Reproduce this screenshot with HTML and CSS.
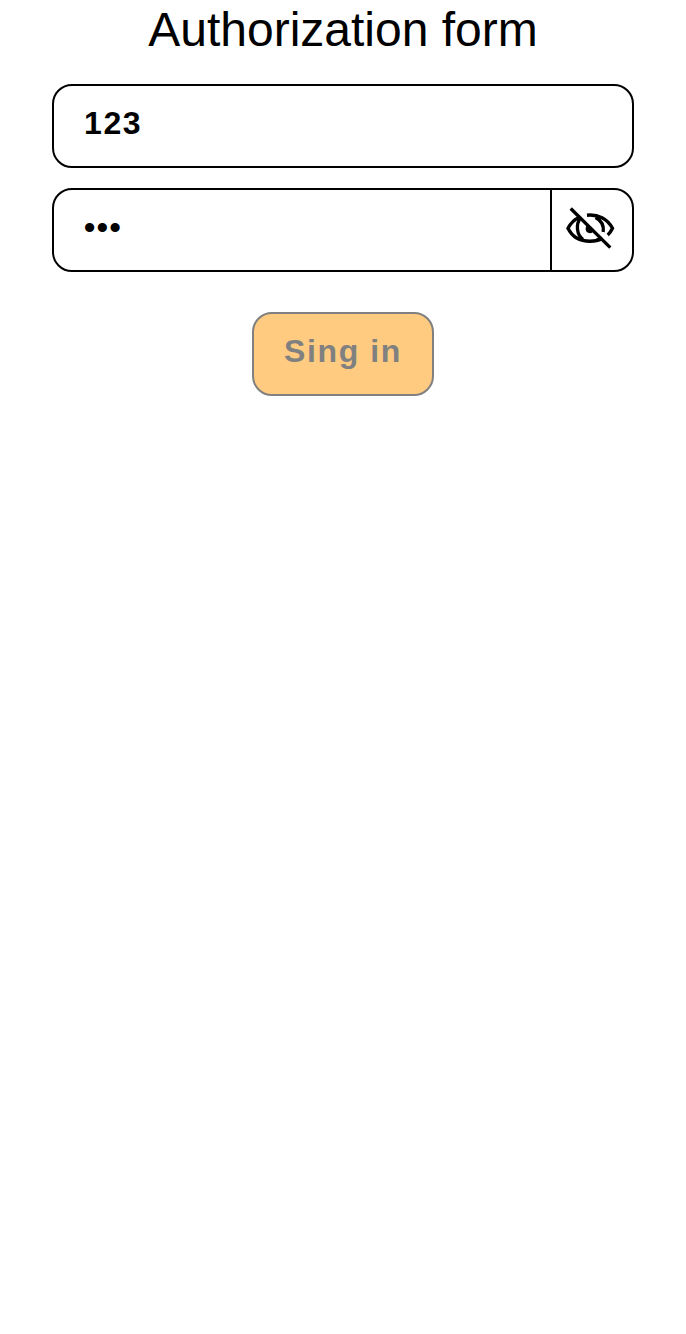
FILE: index.html
```html
<!DOCTYPE html>
<html lang="en">
<head>
<meta charset="utf-8">
<title>Authorization form</title>
<link rel="stylesheet" href="styles.css">
</head>
<body>
<form class="form">
  <h1 class="title">Authorization form</h1>
  <div class="field"><input class="value" type="text" value="123" aria-label="Login"></div>
  <div class="field">
    <input class="value" type="password" value="123" aria-label="Password">
    <button class="toggle" type="button" aria-label="Show password">
      <svg class="eye" viewBox="0 0 80 80" fill="none" stroke="#000" stroke-width="3.400">
        <path d="M28 27C22 29.500 18.500 33.500 16 38.300C20 46.500 28 51.300 38 51.300C43 51.300 47.500 50 50.500 48.300M35 25.200C46 24 55.500 29 60.500 38.300C59.200 41 57.500 43.500 55.700 45"/>
        <path d="M28.500 28C23.800 34 24.300 44.500 31 49.500M43.500 27.500C49.500 30.500 52 36 51.200 42M49 47.800C47.500 49 46 50 44 50.300" stroke-width="3.300"/>
        <path d="M35.500 34.800C33 36.500 33 41.500 36 42.700C38.500 43.800 41.500 42.800 42.300 40Z" fill="#000" stroke="none"/>
        <path d="M18.700 18.500L58.300 57.600" stroke-width="3.300"/>
      </svg>
    </button>
  </div>
  <button class="submit" type="button" disabled>Sing in</button>
</form>
</body>
</html>
```
FILE: styles.css
```css
* { box-sizing: border-box; }
body { margin: 0; background: #fff; color: #000; font-family: "Liberation Sans", Arial, sans-serif; }
.form { display: flex; flex-direction: column; align-items: center; padding: 2px 52px 0; }
.title { margin: 0 0 27px; font-size: 48px; line-height: 55px; font-weight: 400; }
.field { display: flex; width: 582px; height: 84px; margin-bottom: 20px; border: 2px solid #000; border-radius: 20px; overflow: hidden; }
.value { flex: 1; min-width: 0; height: 80px; padding: 18px 30px 24px; border: 0; outline: 0; background: none; color: #000; font: 700 32px "Liberation Sans", Arial, sans-serif; letter-spacing: 1.600px; }
.toggle { width: 82px; padding: 0; border: 0; border-left: 2px solid #000; background: none; color: #000; }
.eye { display: block; width: 80px; height: 80px; }
.submit { width: 182px; height: 84px; margin-top: 20px; padding: 0 0 6px; border: 2px solid #808080; border-radius: 20px; background: #ffcb80; color: #808080; font: 700 32px/37px "Liberation Sans", Arial, sans-serif; letter-spacing: 1.600px; white-space: nowrap; }
```
